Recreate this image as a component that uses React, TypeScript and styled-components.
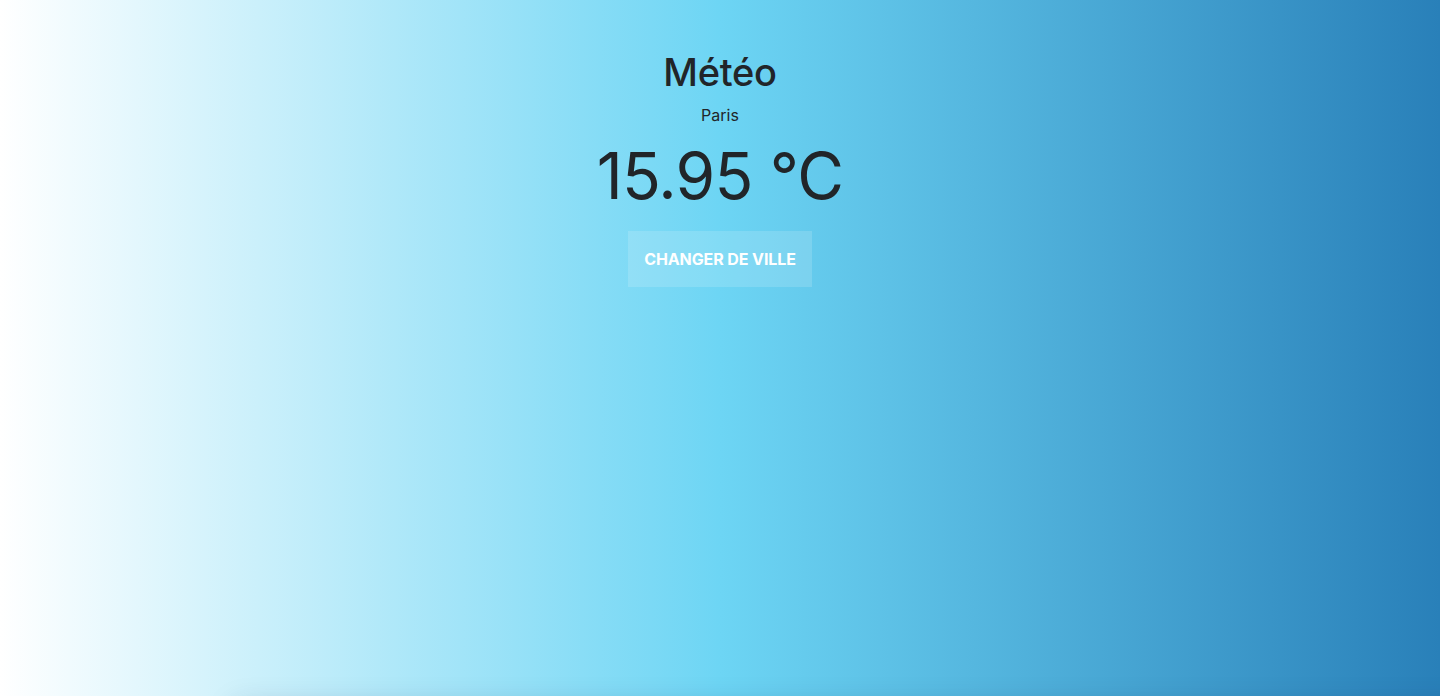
import React from "react";
import styled, { createGlobalStyle } from "styled-components";

const Global = createGlobalStyle`
  html, body { margin: 0; padding: 0; }
  body {
    font-family: Inter, "Noto Sans", sans-serif;
    color: #212529;
    overflow: hidden;
  }
`;

const Page = styled.main`
  position: relative;
  width: 100%;
  height: 696px;
  overflow: hidden;
  background: linear-gradient(to right, #ffffff 0%, #6dd5f4 50%, #2980b9 100%);
  display: flex;
  flex-direction: column;
  align-items: center;
  padding-top: 50px;
  box-sizing: border-box;
`;

const Title = styled.h1`
  margin: 0;
  font-size: 38px;
  font-weight: 500;
  line-height: 44px;
  letter-spacing: -0.3px;
`;

const City = styled.p`
  margin: 11px 0 0;
  font-size: 16px;
  line-height: 20px;
`;

const Temp = styled.div`
  margin-top: 13px;
  font-size: 64px;
  font-weight: 400;
  line-height: 76px;
  letter-spacing: -0.8px;
`;

const Button = styled.button`
  margin-top: 17px;
  width: 184px;
  height: 56px;
  border: none;
  background: rgba(255, 255, 255, 0.15);
  color: #fff;
  font-family: Inter, "Noto Sans", sans-serif;
  font-weight: 700;
  font-size: 16px;
  letter-spacing: -0.1px;
  text-transform: uppercase;
  cursor: pointer;
`;

const Shade = styled.div`
  position: absolute;
  left: 240px;
  right: -40px;
  top: 712px;
  height: 40px;
  box-shadow: 0 0 30px 6px rgba(0, 40, 80, 0.18);
`;

export default function App() {
  return (
    <>
      <Global />
      <Page>
        <Title>Météo</Title>
        <City>Paris</City>
        <Temp>15.95 °C</Temp>
        <Button>Changer de ville</Button>
        <Shade />
      </Page>
    </>
  );
}
